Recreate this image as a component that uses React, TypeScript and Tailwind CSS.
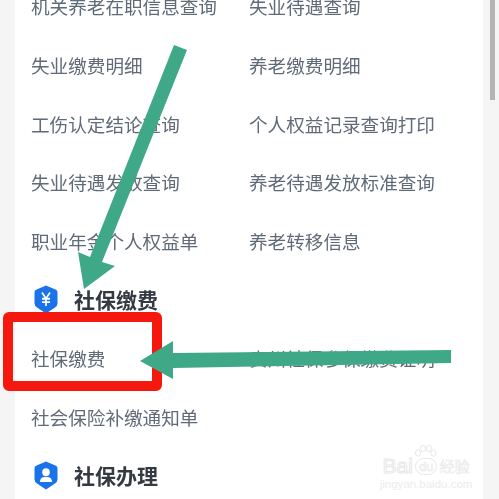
const font = "font-['Noto_Sans_CJK_SC','Noto_Sans',sans-serif]";

const rows = [
  ["机关养老在职信息查询", "失业待遇查询"],
  ["失业缴费明细", "养老缴费明细"],
  ["工伤认定结论查询", "个人权益记录查询打印"],
  ["失业待遇发放查询", "养老待遇发放标准查询"],
  ["职业年金个人权益单", "养老转移信息"],
];

function Row({ left, right }: { left: string; right?: string }) {
  return (
    <div className="grid h-[58.6px] grid-cols-[218px_1fr] items-center text-[18.6px] text-[#5f6b78]">
      <span>{left}</span>
      {right && <span>{right}</span>}
    </div>
  );
}

function Heading({ icon, title }: { icon: "yen" | "person"; title: string }) {
  return (
    <div className="flex h-[58.6px] items-center gap-[16px] pl-[3px]">
      <svg width="24" height="29" viewBox="0 0 24 27" preserveAspectRatio="none">
        <path d="M12 0.5 L22 4.5 Q23.5 5 23.5 7 V17 Q23.5 19.5 21 21 L12 26.5 L3 21 Q0.5 19.5 0.5 17 V7 Q0.5 5 2 4.5 Z" fill="#1a73e8" />
        {icon === "yen" ? (
          <path d="M8 7 L12 12.5 L16 7 M12 12.5 V19.5 M8 12.8 H16 M8 16 H16" fill="none" stroke="#fff" strokeWidth="1.7" />
        ) : (
          <>
            <circle cx="12" cy="10.5" r="3.8" fill="#fff" />
            <path d="M6 19.5 Q6 15.5 10 15 H14 Q18 15.5 18 19.5 Z" fill="#fff" />
          </>
        )}
      </svg>
      <span className="text-[21px] leading-none font-bold text-[#333a42]">{title}</span>
    </div>
  );
}

export default function App() {
  return (
    <div className={`relative flex h-[499px] w-[499px] overflow-hidden bg-[#f5f5f6] ${font}`}>
      {/* white panel */}
      <div className="ml-[15px] h-full w-[468px] bg-white pl-4">
        <div className="-mt-[23px] blur-[0.4px]">
          {rows.map(([l, r]) => (
            <Row key={l} left={l} right={r} />
          ))}
          <Heading icon="yen" title="社保缴费" />
          <Row left="社保缴费" right="贵州社保参保缴费证明" />
          <Row left="社会保险补缴通知单" />
          <Heading icon="person" title="社保办理" />
        </div>
      </div>

      {/* scrollbar */}
      <div className="absolute top-0 left-[490px] h-[100px] w-[5px] bg-[#b4b4b4]" />

      {/* red annotation box */}
      <div className="absolute top-[312px] left-[3px] h-[79px] w-[159px] rounded-[6px] border-[10.5px] border-[#f5180f]" />

      {/* green arrows */}
      <svg className="absolute top-0 left-0" width="499" height="499" viewBox="0 0 499 499">
        <polygon points="174,45 187,50 102,262 115,266 84,289 78,252 90,257" fill="#3fa987" />
        <polygon points="451,350 451,363 173,368 173,379 140,361 173,341 173,353" fill="#3fa987" />
      </svg>

      {/* watermark */}
      <div className="absolute top-[444px] left-[381px] flex w-[90px] flex-col items-center font-['Liberation_Sans',sans-serif] text-[#ececec]">
        <svg className="absolute top-0 left-[30px]" width="26" height="16" viewBox="0 0 26 16" fill="none" stroke="#e8e8e8" strokeWidth="1">
          <ellipse cx="7" cy="9" rx="2.6" ry="3.2" />
          <ellipse cx="12" cy="4.5" rx="2.6" ry="3.2" />
          <ellipse cx="18" cy="4.5" rx="2.6" ry="3.2" />
          <ellipse cx="22.5" cy="9" rx="2.6" ry="3.2" />
        </svg>
        <div className="mt-[10px] flex items-center text-[21px] leading-[24px] text-transparent [-webkit-text-stroke:1px_#e8e8e8]">
          <span>Bai</span>
          <span className="mx-[2px] rounded-full border border-[#e8e8e8] px-[3px] text-[13px] leading-[15px] [-webkit-text-stroke:0.6px_#e8e8e8]">du</span>
          <span className={`text-[15px] [-webkit-text-stroke:0.6px_#e8e8e8] ${font}`}>经验</span>
        </div>
        <div className="text-[11.5px] leading-[13px] whitespace-nowrap">jingyan.baidu.com</div>
      </div>
    </div>
  );
}
